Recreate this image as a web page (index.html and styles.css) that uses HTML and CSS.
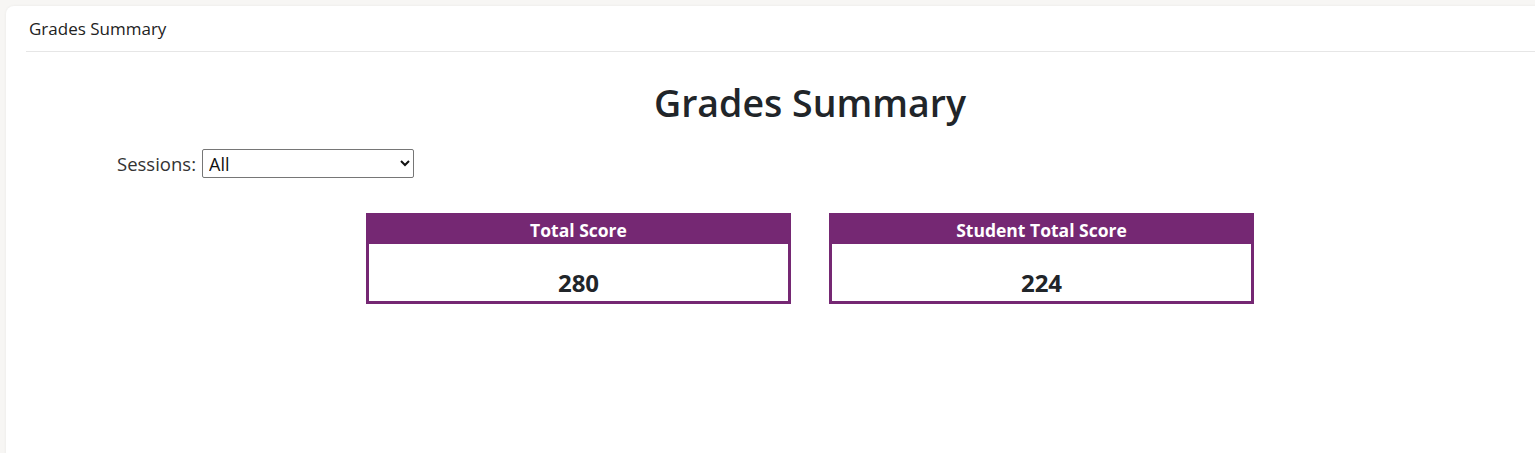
FILE: index.html
```html
<!DOCTYPE html>
<html>
<head>
<meta charset="utf-8">
<link rel="stylesheet" href="styles.css">
</head>
<body>
<div class="card">
  <div class="card-header">Grades Summary</div>
  <div class="card-body">
    <h1 class="title">Grades Summary</h1>
    <div class="filter">
      <label class="filter-label" for="sess">Sessions:</label>
      <select id="sess" class="filter-select"><option>All</option></select>
    </div>
    <div class="scores">
      <div class="score-box">
        <div class="score-head">Total Score</div>
        <div class="score-value">280</div>
      </div>
      <div class="score-box">
        <div class="score-head">Student Total Score</div>
        <div class="score-value">224</div>
      </div>
    </div>
  </div>
</div>
</body>
</html>
```

FILE: styles.css
```css
html, body {
  margin: 0;
  padding: 0;
  overflow: hidden;
  background: #f7f6f4;
  height: 453px;
}
body {
  font-family: "Open Sans", "Noto Sans", sans-serif;
  color: #212529;
  padding: 6px 0 0 6px;
}
.card {
  width: 1608px;
  height: 460px;
  background: #fff;
  border-radius: 8px;
  box-shadow: 0 0 3px rgba(0,0,0,0.06);
  padding: 0 20px;
  box-sizing: border-box;
}
.card-header {
  height: 46px;
  box-sizing: border-box;
  border-bottom: 1px solid #e6e6e6;
  padding: 12px 0 0 3px;
  font-size: 17px;
  line-height: 22px;
  color: #222;
}
.card-body {
  padding-top: 27px;
}
.title {
  margin: 0;
  text-align: center;
  font-size: 37.5px;
  font-weight: 600;
  line-height: 48px;
  color: #212529;
}
.filter {
  margin: 22px 0 0 91px;
  display: flex;
  align-items: center;
  gap: 6px;
}
.filter-label {
  font-size: 18.5px;
  color: #333;
}
.filter-select {
  width: 212px;
  height: 29px;
  font-family: "Open Sans", sans-serif;
  font-size: 18px;
  color: #111;
  border: 1px solid #767676;
  border-radius: 2px;
  background: #fff;
  padding: 0 2px;
}
.scores {
  margin-top: 35px;
  display: flex;
  justify-content: center;
  gap: 38px;
}
.score-box {
  width: 425px;
  height: 91px;
  box-sizing: border-box;
  border: 3px solid #752873;
  display: flex;
  flex-direction: column;
}
.score-head {
  background: #752873;
  color: #fff;
  font-weight: 700;
  font-size: 17.5px;
  text-align: center;
  height: 28px;
  line-height: 29px;
}
.score-value {
  flex: 1;
  display: flex;
  align-items: flex-end;
  justify-content: center;
  font-size: 24px;
  font-weight: 700;
  color: #212529;
  padding-bottom: 2px;
}
```
